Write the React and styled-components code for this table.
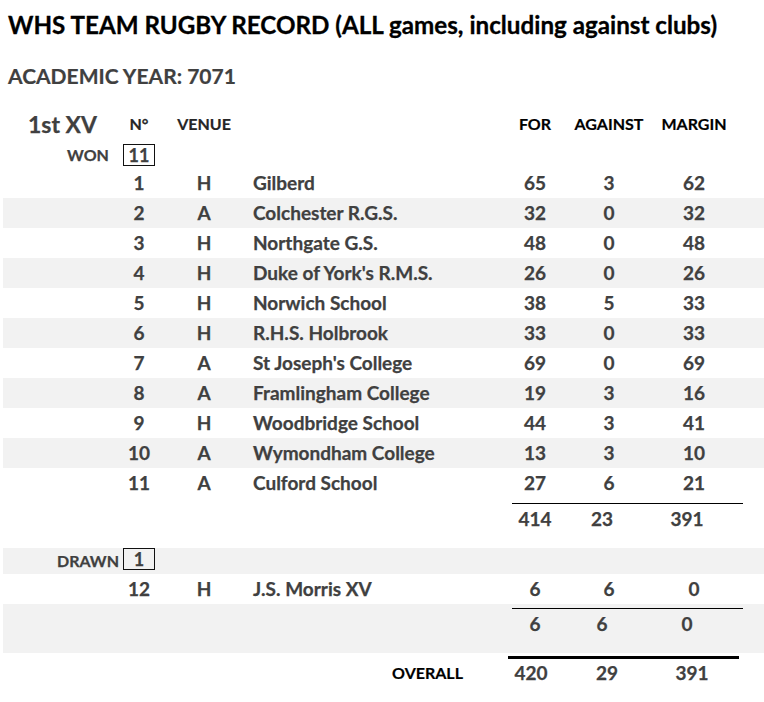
import React from 'react';
import styled, { createGlobalStyle } from 'styled-components';

const GlobalStyle = createGlobalStyle`
    body {
        margin: 0;
        background: #ffffff;
        font-family: Lato, "Open Sans", sans-serif;
        font-weight: 700;
        color: #404040;
    }
`;

const COLS = '117px 38px 92px 255px 60px 88px 82px 1fr';

const Page = styled.div`
    width: 764px;
    height: 702px;
    overflow: hidden;
`;

const Title = styled.h1`
    margin: 0;
    padding: 10px 0 0 8px;
    font-size: 24.2px;
    line-height: 30px;
    font-weight: 700;
    color: #000;
    white-space: nowrap;
    -webkit-text-stroke: 0.3px #000;
`;

const Year = styled.h2`
    margin: 26px 0 0 0;
    padding-left: 8px;
    font-size: 21px;
    line-height: 20px;
    font-weight: 700;
    color: #404040;
    -webkit-text-stroke: 0.2px #404040;
`;

const Table = styled.div`
    margin: 22px 0 0 3px;
    display: flex;
    flex-direction: column;
`;

const Row = styled.div`
    display: grid;
    grid-template-columns: ${COLS};
    height: ${props => props.h || 30}px;
    background: ${props => props.shaded ? '#f2f2f2' : 'transparent'};
    font-size: 19px;
    line-height: 30px;
    white-space: nowrap;
    -webkit-text-stroke: 0.25px #404040;
`;

const Cell = styled.div`
    text-align: ${props => props.align || 'center'};
    padding-left: ${props => props.pl || 0}px;
    overflow: hidden;
`;

const TeamName = styled.div`
    font-size: 23px;
    line-height: 32px;
    padding-left: 25px;
    color: #404040;
`;

const Head = styled.div`
    font-size: 16px;
    line-height: 32px;
    text-align: center;
    color: ${props => props.dark ? '#000' : '#262626'};
    -webkit-text-stroke: 0.2px ${props => props.dark ? '#000' : '#262626'};
`;

const Label = styled.div`
    font-size: 16px;
    line-height: 26px;
    text-align: center;
    padding-left: 53px;
    color: #404040;
`;

const CountBox = styled.div`
    margin: ${props => props.top || 0}px 0 0 3px;
    width: 30px;
    height: 20px;
    border: 1px solid #111;
    font-size: 18px;
    line-height: 21px;
    text-align: center;
    color: #404040;
`;

const Totals = styled.div`
    grid-column: 5 / 9;
    margin: ${props => props.top}px ${props => props.right}px 0 ${props => props.left}px;
    border-top: ${props => props.thick ? 3 : 1}px solid #000;
    display: grid;
    grid-template-columns: ${props => props.cols};
    line-height: ${props => props.lh || 30}px;
    align-self: start;
`;

const Overall = styled.div`
    grid-column: 4;
    text-align: right;
    padding-right: 42px;
    font-size: 16px;
    color: #000;
    margin-top: 6px;
    line-height: 28px;
    -webkit-text-stroke: 0.2px #000;
`;

const won = [
    [1, 'H', 'Gilberd', 65, 3, 62],
    [2, 'A', 'Colchester R.G.S.', 32, 0, 32],
    [3, 'H', 'Northgate G.S.', 48, 0, 48],
    [4, 'H', "Duke of York's R.M.S.", 26, 0, 26],
    [5, 'H', 'Norwich School', 38, 5, 33],
    [6, 'H', 'R.H.S. Holbrook', 33, 0, 33],
    [7, 'A', "St Joseph's College", 69, 0, 69],
    [8, 'A', 'Framlingham College', 19, 3, 16],
    [9, 'H', 'Woodbridge School', 44, 3, 41],
    [10, 'A', 'Wymondham College', 13, 3, 10],
    [11, 'A', 'Culford School', 27, 6, 21],
];

const drawn = [[12, 'H', 'J.S. Morris XV', 6, 6, 0]];

const GameRow = ({ game, shaded }) => (
    <Row shaded={shaded}>
        <Cell />
        <Cell>{game[0]}</Cell>
        <Cell>{game[1]}</Cell>
        <Cell align="left" pl={3}>{game[2]}</Cell>
        <Cell>{game[3]}</Cell>
        <Cell>{game[4]}</Cell>
        <Cell>{game[5]}</Cell>
        <Cell />
    </Row>
);

const SumCells = ({ values }) => values.map((v, i) => <Cell key={i}>{v}</Cell>);

const App = () => (
    <Page>
        <GlobalStyle />
        <Title>WHS TEAM RUGBY RECORD (ALL games, including against clubs)</Title>
        <Year>ACADEMIC YEAR: 7071</Year>
        <Table>
            <Row h={32}>
                <TeamName>1st XV</TeamName>
                <Head>N°</Head>
                <Head>VENUE</Head>
                <div />
                <Head dark>FOR</Head>
                <Head dark>AGAINST</Head>
                <Head dark>MARGIN</Head>
            </Row>
            <Row h={28}>
                <Label style={{ lineHeight: '30px' }}>WON</Label>
                <CountBox top={4}>11</CountBox>
            </Row>
            {won.map((g, i) => <GameRow key={g[0]} game={g} shaded={i % 2 === 1} />)}
            <Row h={50}>
                <Totals top={5} left={7} right={21} cols="46px 88px 82px 1fr">
                    <SumCells values={[414, 23, 391]} />
                </Totals>
            </Row>
            <Row h={26} shaded>
                <Label>DRAWN</Label>
                <CountBox>1</CountBox>
            </Row>
            {drawn.map(g => <GameRow key={g[0]} game={g} />)}
            <Row h={49} shaded>
                <Totals top={4} left={7} right={21} cols="46px 88px 82px 1fr">
                    <SumCells values={[6, 6, 0]} />
                </Totals>
            </Row>
            <Row h={49}>
                <Overall>OVERALL</Overall>
                <Totals top={3} left={3} right={25} thick lh={28} cols="46px 106px 64px 1fr">
                    <SumCells values={[420, 29, 391]} />
                </Totals>
            </Row>
        </Table>
    </Page>
);

export default App;
